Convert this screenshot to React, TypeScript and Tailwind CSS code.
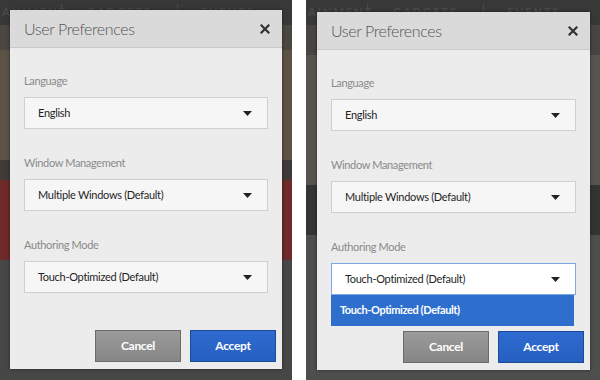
import React from "react";

const font = { fontFamily: "Lato, 'Open Sans', sans-serif" };

function Caret() {
  return (
    <svg width="9" height="5" viewBox="0 0 9 5" className="shrink-0">
      <path d="M0 0 L9 0 L4.5 5 Z" fill="#222" />
    </svg>
  );
}

function Select({ value, active }: { value: string; active?: boolean }) {
  return (
    <div
      className={
        "h-[32px] flex items-center justify-between pl-[13px] pr-[15px] text-[11px] tracking-[-0.3px] text-[#1f1f1f] border " +
        (active ? "bg-white border-[#7fa7e0]" : "bg-[#f6f6f6] border-[#cfcfcf]")
      }
    >
      <span>{value}</span>
      <Caret />
    </div>
  );
}

function Field({ label, value, active, open }: { label: string; value: string; active?: boolean; open?: boolean }) {
  return (
    <div className="flex flex-col relative">
      <div className="text-[11px] tracking-[-0.35px] text-[#8a8a8a] h-[16px] leading-[16px] mb-[8px]">{label}</div>
      <Select value={value} active={active} />
      {open && (
        <div className="absolute left-0 right-[2px] top-[56px] h-[31px] bg-[#2e6fcd] flex items-center pl-[9px] text-[11px] tracking-[-0.4px] font-bold text-white">
          Touch-Optimized (Default)
        </div>
      )}
    </div>
  );
}

function Dialog({ open }: { open?: boolean }) {
  return (
    <div className="flex flex-col w-full h-full bg-[#ececec] shadow-[0_0_3px_rgba(0,0,0,0.5)]" style={font}>
      <div className="h-[38px] bg-[#dadada] border-b border-[#c8c8c8] flex items-center justify-between pl-[14px] pr-[12px] shrink-0">
        <span className="text-[16px] tracking-[-0.4px] font-light text-[#555]">User Preferences</span>
        <svg width="10" height="10" viewBox="0 0 10 10">
          <path d="M1.5 1.5 L8.5 8.5 M8.5 1.5 L1.5 8.5" stroke="#333" strokeWidth="2.2" strokeLinecap="square" />
        </svg>
      </div>
      <div className="flex flex-col px-[14px] pt-[25px] gap-[26px]">
        <Field label="Language" value="English" />
        <Field label="Window Management" value="Multiple Windows (Default)" />
        <Field label="Authoring Mode" value="Touch-Optimized (Default)" active={open} open={open} />
      </div>
      <div className="flex justify-end gap-[9px] pr-[6px] mt-auto mb-[7px]">
        <button className="w-[86px] h-[32px] border border-[#6c6c6c] bg-gradient-to-b from-[#9b9b9b] to-[#868686] text-white font-bold text-[12px] tracking-[-0.3px]">
          Cancel
        </button>
        <button className="w-[86px] h-[32px] border border-[#1d4a97] bg-gradient-to-b from-[#2f6bd0] to-[#255fc0] text-white font-bold text-[12px] tracking-[-0.3px]">
          Accept
        </button>
      </div>
    </div>
  );
}

function Backdrop({ alt }: { alt?: boolean }) {
  return (
    <div className="absolute inset-0 flex flex-col" style={font}>
      <div className="h-[25px] bg-[#383838] flex items-center text-[11px] tracking-[2px] text-[#4a4a4a] font-bold whitespace-nowrap">
        <span className="pl-[2px] w-[62px] shrink-0 border-r border-[#4a4a4a]">AINMENT</span>
        <span className="w-[116px] shrink-0 text-center border-r border-[#4a4a4a]">GADGETS</span>
        <span className="w-[100px] shrink-0 text-center">EVENTS</span>
      </div>
      {alt ? (
        <>
          <div className="h-[30px] bg-[#474442]" />
          <div className="h-[130px] bg-[#575450]" />
          <div className="h-[50px] bg-[#343434]" />
          <div className="flex-1 bg-[#4e4e4e]" />
        </>
      ) : (
        <>
          <div className="h-[25px] bg-[#4a4642]" />
          <div className="h-[110px] bg-[#5c5246]" />
          <div className="h-[20px] bg-[#3e3a38]" />
          <div className="h-[80px] bg-[#6e2a28]" />
          <div className="flex-1 bg-[#474747]" />
        </>
      )}
    </div>
  );
}

export default function App() {
  return (
    <div className="w-[600px] h-[380px] flex bg-white overflow-hidden">
      <div className="relative w-[292px] h-full overflow-hidden">
        <Backdrop />
        <div className="absolute left-[10px] top-[10px] w-[272px] h-[359px]">
          <Dialog />
        </div>
      </div>
      <div className="w-[14px] bg-white" />
      <div className="relative w-[294px] h-full overflow-hidden">
        <Backdrop alt />
        <div className="absolute left-[11px] top-[12px] w-[273px] h-[358px]">
          <Dialog open />
        </div>
      </div>
    </div>
  );
}
